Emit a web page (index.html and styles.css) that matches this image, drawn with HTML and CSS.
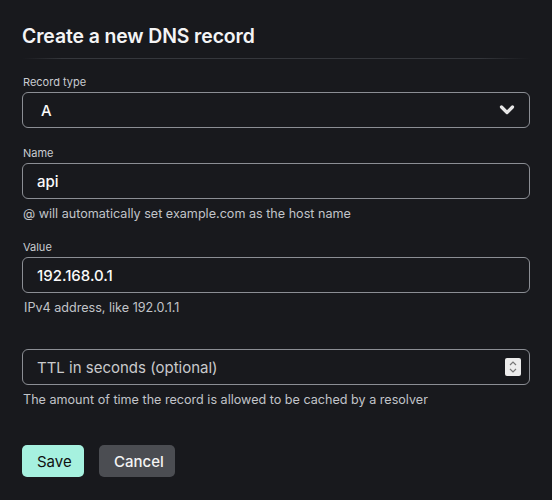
FILE: index.html
```html
<!DOCTYPE html>
<html>
<head>
<meta charset="utf-8">
<link rel="stylesheet" href="styles.css">
</head>
<body>
<div class="modal">
  <h1 class="title">Create a new DNS record</h1>
  <div class="divider"></div>
  <form class="form">
    <div class="field">
      <label class="label">Record type</label>
      <div class="control select">
        <span class="value">A</span>
        <svg class="chevron" width="16" height="12" viewBox="0 0 16 12"><path d="M2.5 3 L8 8.5 L13.5 3" fill="none" stroke="#e6e6e6" stroke-width="3.2" stroke-linecap="round" stroke-linejoin="round"/></svg>
      </div>
    </div>
    <div class="field">
      <label class="label">Name</label>
      <div class="control"><span class="value">api</span></div>
      <div class="help">@ will automatically set example.com as the host name</div>
    </div>
    <div class="field">
      <label class="label">Value</label>
      <div class="control"><span class="value">192.168.0.1</span></div>
      <div class="help help-indent">IPv4 address, like 192.0.1.1</div>
    </div>
    <div class="field field-ttl">
      <div class="control">
        <span class="placeholder">TTL in seconds (optional)</span>
        <span class="spinner">
          <svg width="16" height="18" viewBox="0 0 16 18"><path d="M5 7 L8 4 L11 7" fill="none" stroke="#777" stroke-width="1.2"/><path d="M5 11 L8 14 L11 11" fill="none" stroke="#777" stroke-width="1.2"/></svg>
        </span>
      </div>
      <div class="help">The amount of time the record is allowed to be cached by a resolver</div>
    </div>
    <div class="actions">
      <button type="button" class="btn btn-save">Save</button>
      <button type="button" class="btn btn-cancel">Cancel</button>
    </div>
  </form>
</div>
</body>
</html>
```
FILE: styles.css
```css
html, body {
  margin: 0;
  padding: 0;
  background: #18191d;
}
body {
  font-family: Inter, "Noto Sans", "Liberation Sans", sans-serif;
  color: #f2f2f2;
  width: 552px;
  height: 500px;
  overflow: hidden;
}
.modal {
  padding: 24px 22px 0 22px;
  width: 508px;
  box-sizing: content-box;
}
.title {
  margin: 0;
  font-size: 19.4px;
  font-weight: 600;
  line-height: 24px;
  color: #f4f4f5;
  letter-spacing: -0.1px;
}
.divider {
  height: 1px;
  margin-top: 10px;
  background: linear-gradient(to right, rgba(60,62,68,0) 0%, #35373c 8%, #35373c 90%, rgba(60,62,68,0) 100%);
}
.form {
  margin-top: 16px;
}
.field {
  display: flex;
  flex-direction: column;
}
.label {
  font-size: 11px;
  line-height: 14px;
  color: #c9ccd1;
  margin: 0 0 3px 1px;
}
.control {
  height: 34px;
  border: 1px solid #8b8e94;
  border-radius: 6px;
  display: flex;
  align-items: center;
  padding: 0 14px 0 14px;
  justify-content: space-between;
}
.value {
  font-size: 15px;
  font-weight: 500;
  color: #fafafa;
}
.placeholder {
  font-size: 15px;
  color: #c9cacc;
}
.chevron {
  display: block;
}
.help {
  font-size: 12.6px;
  line-height: 16px;
  color: #c1c4c9;
  margin-top: 7px;
  margin-left: 1px;
}
.help-indent {
  margin-left: 2px;
}
.field + .field {
  margin-top: 18px;
}
.field-ttl {
  margin-top: 33px !important;
}
.select {
  padding-left: 18px;
  padding-right: 14px;
}
.spinner {
  width: 16px;
  height: 18px;
  background: #ececec;
  border-radius: 2px;
  display: flex;
  align-items: center;
  justify-content: center;
  margin-right: -6px;
}
.spinner svg {
  display: block;
}
.actions {
  display: flex;
  gap: 15px;
  margin-top: 37px;
}
.btn {
  font-family: inherit;
  font-size: 15px;
  height: 32px;
  border: none;
  border-radius: 5px;
  padding: 0 15px;
  cursor: pointer;
}
.btn-save {
  background: #a6f1df;
  color: #111;
  width: 62px;
}
.btn-cancel {
  background: #4b4d52;
  color: #f4f4f4;
  width: 76px;
  font-weight: 500;
}
```
